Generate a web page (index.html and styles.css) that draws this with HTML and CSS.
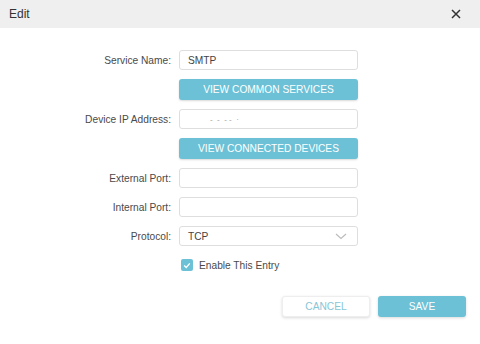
FILE: index.html
```html
<!DOCTYPE html>
<html lang="en">
<head>
  <meta charset="UTF-8">
  <meta name="viewport" content="width=device-width, initial-scale=1.0">
  <title>Edit</title>
  <link rel="stylesheet" href="styles.css">
</head>
<body>

  <div class="dialog">
    <div class="dialog-head">
      <span class="dialog-title">Edit</span>
      <button class="close" aria-label="Close">
        <svg width="10" height="10" viewBox="0 0 10 10">
          <path d="M1 1 L9 9 M9 1 L1 9" stroke="#333" stroke-width="1.5" fill="none"/>
        </svg>
      </button>
    </div>

    <form class="form">
      <label class="label">Service Name:</label>
      <input type="text" class="field" value="SMTP">

      <button type="button" class="btn-wide">VIEW COMMON SERVICES</button>

      <label class="label">Device IP Address:</label>
      <div class="field ip"><span class="masked">-&nbsp;&nbsp;-&nbsp;&nbsp;-&nbsp;-&nbsp;&nbsp;·</span></div>

      <button type="button" class="btn-wide">VIEW CONNECTED DEVICES</button>

      <label class="label">External Port:</label>
      <input type="text" class="field">

      <label class="label">Internal Port:</label>
      <input type="text" class="field">

      <label class="label">Protocol:</label>
      <div class="field select">
        <span>TCP</span>
        <svg width="12" height="7" viewBox="0 0 12 7">
          <path d="M1 1 L6 5.5 L11 1" stroke="#bbb" stroke-width="1.1" fill="none"/>
        </svg>
      </div>

      <div class="check-row">
        <span class="checkbox">
          <svg width="8" height="7" viewBox="0 0 8 7">
            <path d="M1.2 3.6 L3.2 5.4 L6.8 1.4" stroke="#fff" stroke-width="1.4" fill="none"/>
          </svg>
        </span>
        <span>Enable This Entry</span>
      </div>
    </form>

    <div class="dialog-foot">
      <button class="btn cancel">CANCEL</button>
      <button class="btn save">SAVE</button>
    </div>
  </div>

</body>
</html>
```

FILE: styles.css
```css
* {
  box-sizing: border-box;
  margin: 0;
  padding: 0;
}

body {
  font-family: "Liberation Sans", Arial, sans-serif;
  background-color: #fff;
  color: #333;
  width: 480px;
  height: 344px;
}

.dialog-head {
  height: 28px;
  background-color: #efefef;
  display: flex;
  align-items: center;
  justify-content: space-between;
  padding: 0 19px 0 9px;
}

.dialog-title {
  font-size: 12px;
  color: #333;
}

.close {
  background: none;
  border: none;
  display: flex;
  cursor: pointer;
}

.form {
  display: grid;
  grid-template-columns: 171px 179px;
  column-gap: 8px;
  row-gap: 9px;
  padding-top: 22px;
  font-size: 10.2px;
}

.label {
  text-align: right;
  color: #4a4a4a;
  align-self: center;
}

.field {
  grid-column: 2;
  height: 20px;
  border: 1px solid #dedede;
  border-radius: 3px;
  background-color: #fff;
  padding: 0 8px;
  font-family: inherit;
  font-size: 10.2px;
  color: #444;
  outline: none;
}

.ip {
  display: flex;
  align-items: center;
}

.masked {
  color: #999;
  font-size: 8px;
  padding-left: 22px;
}

.select {
  display: flex;
  align-items: center;
  justify-content: space-between;
  padding-right: 10px;
}

.btn-wide {
  grid-column: 2;
  height: 21px;
  border: none;
  border-radius: 3px;
  background-color: #6cc1d6;
  color: #fff;
  font-family: inherit;
  font-size: 10.2px;
  box-shadow: 0 1px 2px rgba(0, 0, 0, 0.15);
  cursor: pointer;
}

.check-row {
  grid-column: 2;
  display: flex;
  align-items: center;
  gap: 6px;
  padding-left: 2px;
  margin-top: 3px;
  height: 14px;
  color: #4a4a4a;
}

.checkbox {
  width: 12px;
  height: 12px;
  border-radius: 2px;
  background-color: #6cc1d6;
  display: flex;
  align-items: center;
  justify-content: center;
}

.dialog-foot {
  display: flex;
  justify-content: flex-end;
  gap: 8px;
  padding: 24px 14px 0 0;
}

.btn {
  width: 88px;
  height: 21px;
  border-radius: 3px;
  font-family: inherit;
  font-size: 10.2px;
  cursor: pointer;
  box-shadow: 0 1px 3px rgba(0, 0, 0, 0.15);
}

.cancel {
  background-color: #fff;
  border: 1px solid #eee;
  color: #88c6d6;
}

.save {
  background-color: #6cc1d6;
  border: none;
  color: #fff;
}
```
